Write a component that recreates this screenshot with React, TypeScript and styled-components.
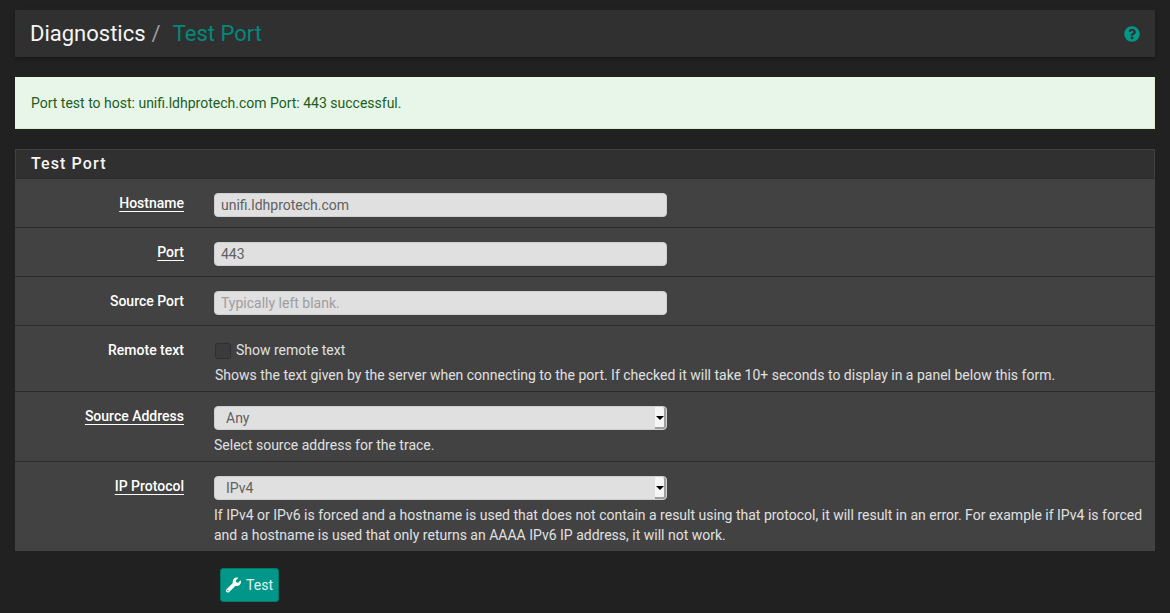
import styled, { createGlobalStyle } from 'styled-components'
import { FaQuestionCircle, FaWrench } from 'react-icons/fa'

const GlobalStyle = createGlobalStyle`
  html, body {
    margin: 0;
    padding: 0;
    background-color: #212121;
    font-family: 'Roboto', sans-serif;
    font-size: 14px;
    line-height: 20px;
    color: #e0e0e0;
  }
  * {
    box-sizing: border-box;
  }
`

const App = () => {
  return (
    <PAGE>
      <GlobalStyle />
      <HEADER>
        <CRUMBS>
          <CRUMB>Diagnostics</CRUMB>
          <SLASH>/</SLASH>
          <ACTIVE>Test Port</ACTIVE>
        </CRUMBS>
        <HELP>
          <FaQuestionCircle />
        </HELP>
      </HEADER>
      <ALERT>Port test to host: unifi.ldhprotech.com Port: 443 successful.</ALERT>
      <PANEL>
        <HEADING>Test Port</HEADING>
        <ROW>
          <LABEL $required>
            <span>Hostname</span>
          </LABEL>
          <FIELD>
            <INPUT defaultValue='unifi.ldhprotech.com' />
          </FIELD>
        </ROW>
        <ROW>
          <LABEL $required>
            <span>Port</span>
          </LABEL>
          <FIELD>
            <INPUT defaultValue='443' />
          </FIELD>
        </ROW>
        <ROW>
          <LABEL>
            <span>Source Port</span>
          </LABEL>
          <FIELD>
            <INPUT placeholder='Typically left blank.' />
          </FIELD>
        </ROW>
        <ROW>
          <LABEL>
            <span>Remote text</span>
          </LABEL>
          <FIELD>
            <CHECK_LINE>
              <CHECKBOX />
              Show remote text
            </CHECK_LINE>
            <HELP_TEXT $indent>
              Shows the text given by the server when connecting to the port. If checked it will take 10+ seconds to
              display in a panel below this form.
            </HELP_TEXT>
          </FIELD>
        </ROW>
        <ROW>
          <LABEL $required>
            <span>Source Address</span>
          </LABEL>
          <FIELD>
            <SELECT_BOX>
              Any
              <ARROW />
            </SELECT_BOX>
            <HELP_TEXT>Select source address for the trace.</HELP_TEXT>
          </FIELD>
        </ROW>
        <ROW>
          <LABEL $required>
            <span>IP Protocol</span>
          </LABEL>
          <FIELD>
            <SELECT_BOX>
              IPv4
              <ARROW />
            </SELECT_BOX>
            <HELP_TEXT>
              If IPv4 or IPv6 is forced and a hostname is used that does not contain a result using that protocol, it
              will result in an error. For example if IPv4 is forced and a hostname is used that only returns an AAAA
              IPv6 IP address, it will not work.
            </HELP_TEXT>
          </FIELD>
        </ROW>
      </PANEL>
      <BUTTON_ROW>
        <BUTTON>
          <FaWrench />
          Test
        </BUTTON>
      </BUTTON_ROW>
    </PAGE>
  )
}

export default App

const PAGE = styled.div`
  width: 1170px;
  height: 613px;
  padding: 10px 15px 0;
  overflow: hidden;
`

const HEADER = styled.div`
  height: 47px;
  background-color: #303030;
  box-shadow: 0 2px 4px rgba(0, 0, 0, 0.3);
  display: flex;
  align-items: center;
  justify-content: space-between;
  padding: 0 15px;
`

const CRUMBS = styled.div`
  display: flex;
  align-items: baseline;
  font-size: 22px;
  line-height: 26px;
`

const CRUMB = styled.span`
  color: #f5f5f5;
`

const SLASH = styled.span`
  color: #9e9e9e;
  margin: 0 12px 0 6px;
`

const ACTIVE = styled.span`
  color: #00897b;
`

const HELP = styled.div`
  color: #009688;
  font-size: 16px;
  display: flex;
`

const ALERT = styled.div`
  height: 52px;
  margin-top: 20px;
  padding: 16px;
  background-color: #e8f5e9;
  border-bottom: 1px solid #dcedc8;
  border-right: 1px solid #dcedc8;
  color: #1b5e20;
`

const PANEL = styled.div`
  margin-top: 20px;
  background-color: #424242;
`

const HEADING = styled.div`
  height: 30px;
  padding: 0 15px;
  border: 1px solid #424242;
  border-bottom-color: #2b2b2b;
  background-color: #303030;
  color: #f5f5f5;
  font-size: 16px;
  font-weight: 500;
  letter-spacing: 1.1px;
  line-height: 28px;
`

const ROW = styled.div`
  display: flex;
  padding: 14px 0 6px;
  border-bottom: 1px solid #2b2b2b;
  &:last-child {
    border-bottom: none;
  }
`

const LABEL = styled.div<{ $required?: boolean }>`
  width: 169px;
  flex: none;
  text-align: right;
  color: #fff;
  font-weight: 500;
  line-height: 20px;
  span {
    text-decoration: ${(props) => (props.$required ? 'underline' : 'none')};
    text-underline-offset: 3px;
  }
`

const FIELD = styled.div`
  margin-left: 30px;
  flex: 1;
  padding-right: 8px;
`

const INPUT = styled.input`
  display: block;
  width: 453px;
  height: 24px;
  padding: 0 6px;
  border: 1px solid #cfcfcf;
  border-radius: 4px;
  background-color: #e0e0e0;
  color: #616161;
  font-family: inherit;
  font-size: 14px;
  margin-bottom: 4px;
  &::placeholder {
    color: #9e9e9e;
    opacity: 1;
  }
`

const CHECK_LINE = styled.label`
  display: flex;
  align-items: center;
  gap: 5px;
  margin-left: 1px;
  height: 20px;
`

const CHECKBOX = styled.span`
  width: 16px;
  height: 16px;
  margin-top: 2px;
  border: 1px solid #2f2f2f;
  border-radius: 3px;
  background-color: #3b3b3b;
`

const HELP_TEXT = styled.div<{ $indent?: boolean }>`
  margin-top: 5px;
  margin-left: ${(props) => (props.$indent ? '1px' : '0')};
`

const SELECT_BOX = styled.div`
  position: relative;
  width: 453px;
  height: 24px;
  padding-left: 11px;
  border: 1px solid #cfcfcf;
  border-radius: 4px;
  background-color: #e0e0e0;
  color: #616161;
  line-height: 23px;
`

const ARROW = styled.span`
  position: absolute;
  top: 0;
  right: 0;
  width: 11px;
  height: 22px;
  background-color: #f5f5f5;
  border-right: 2px solid #9e9e9e;
  border-bottom: 2px solid #9e9e9e;
  border-radius: 0 3px 3px 0;
  &::after {
    content: '';
    position: absolute;
    top: 9px;
    left: 1px;
    border: 4px solid transparent;
    border-top: 4px solid #000;
    border-bottom: none;
  }
`

const BUTTON_ROW = styled.div`
  margin-top: 17px;
  padding-left: 205px;
`

const BUTTON = styled.button`
  display: flex;
  align-items: center;
  gap: 5px;
  height: 34px;
  width: 59px;
  padding: 0 5px;
  border: 1px solid #00796b;
  border-radius: 3px;
  background-color: #009688;
  color: #e0f2f1;
  font-family: inherit;
  font-size: 14px;
  svg {
    font-size: 16px;
    color: #fff;
  }
`
